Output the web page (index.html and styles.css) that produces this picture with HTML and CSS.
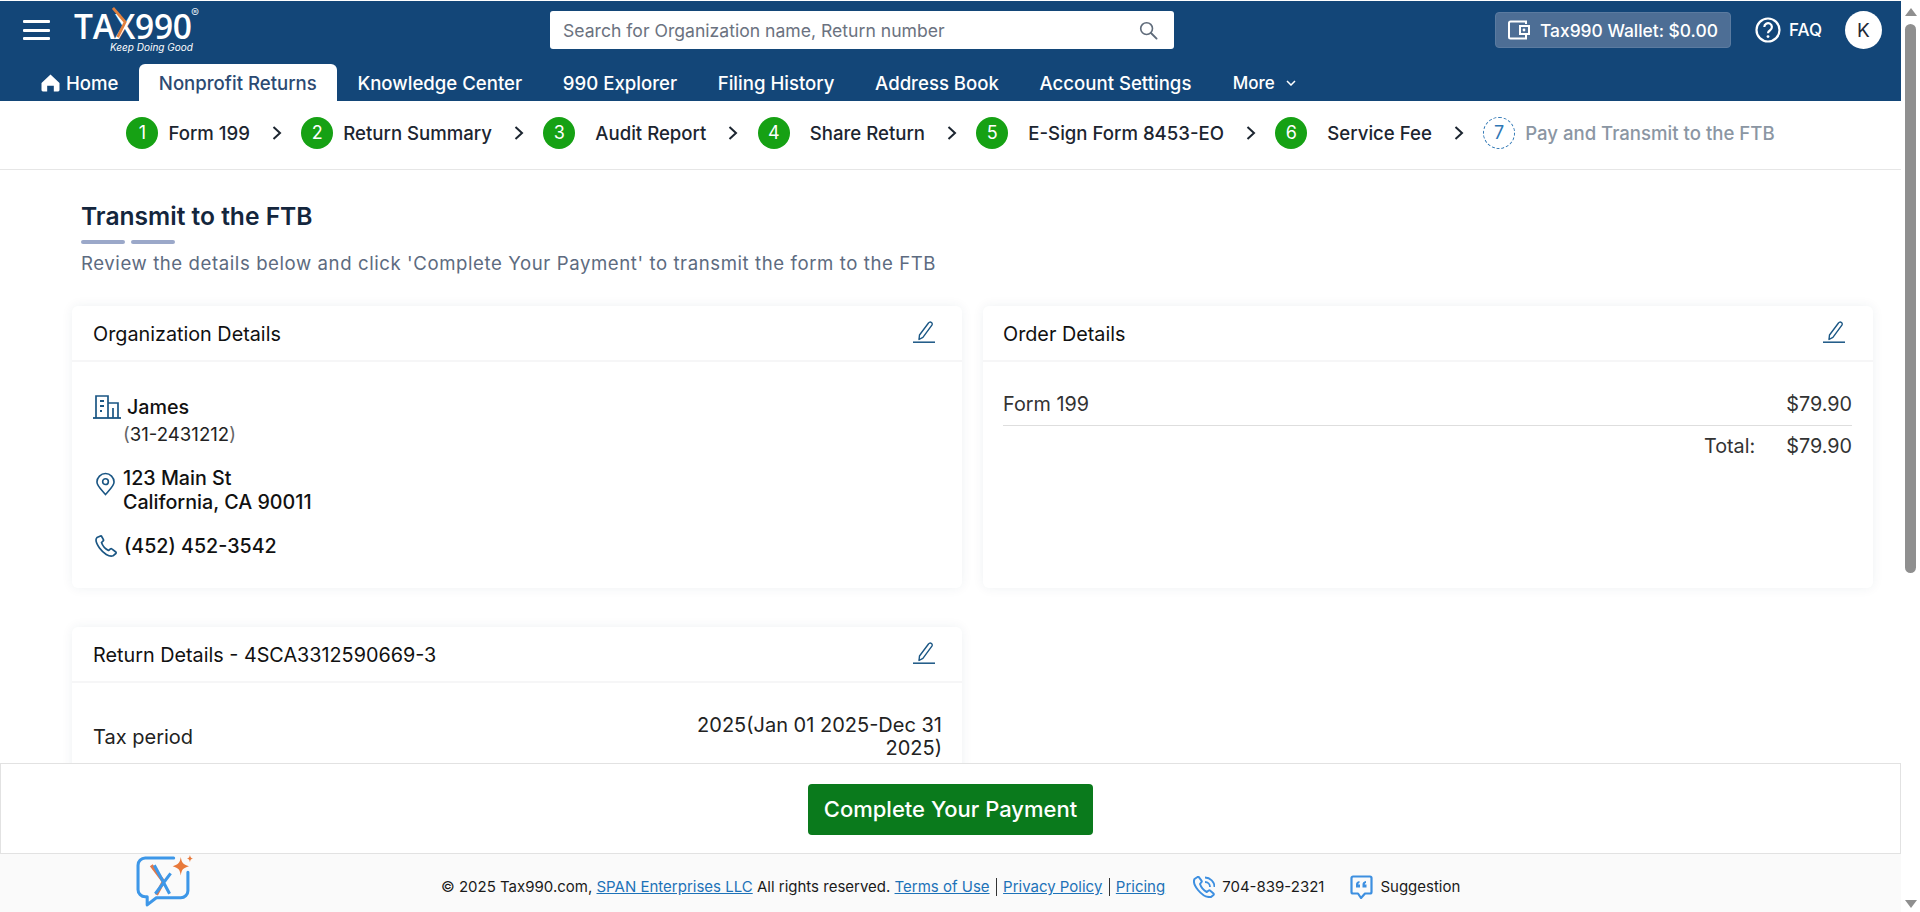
FILE: index.html
```html
<!DOCTYPE html>
<html lang="en">
<head>
<meta charset="utf-8">
<title>Transmit to the FTB - Tax990</title>
<link rel="stylesheet" href="styles.css">
</head>
<body>
<div class="page">
  <div class="app">
    <header class="header">
      <div class="topbar">
        <button class="burger" aria-label="Menu"><span></span><span></span><span></span></button>
        <div class="logo">
          <span class="logo-word">TAX990</span>
          <svg class="logo-slash" viewBox="0 0 16 32"><path d="M1 0 L14 15 L6 31" fill="none" stroke="#e0813f" stroke-width="3"/></svg>
          <span class="logo-reg">®</span>
          <span class="logo-tag">Keep Doing Good</span>
        </div>
        <div class="search">
          <span class="search-text">Search for Organization name, Return number</span>
          <svg class="search-icon" viewBox="0 0 20 20"><circle cx="8" cy="8" r="6.2" fill="none" stroke="#5f6b7a" stroke-width="1.7"/><path d="M12.6 12.6 L18.5 18.5" stroke="#5f6b7a" stroke-width="2" stroke-linecap="round"/></svg>
        </div>
        <div class="top-right">
          <div class="wallet">
            <svg class="wallet-icon" viewBox="0 0 22 20"><path d="M18 4V1.5H2.5A1.5 1.5 0 0 0 1 3v14a1.5 1.5 0 0 0 1.5 1.5H18V15" fill="none" stroke="#fff" stroke-width="2"/><path d="M12 6h9v8h-9z" fill="none" stroke="#fff" stroke-width="2"/><circle cx="16" cy="10" r="1.4" fill="#fff"/></svg>
            <span>Tax990 Wallet: $0.00</span>
          </div>
          <div class="faq">
            <svg class="faq-icon" viewBox="0 0 26 26"><circle cx="13" cy="13" r="11.5" fill="none" stroke="#fff" stroke-width="2.2"/><path d="M9.3 10a3.8 3.8 0 1 1 5.8 3.2c-1.3.8-2.1 1.500-2.100 3.100" fill="none" stroke="#fff" stroke-width="2.200"/><circle cx="13" cy="19.600" r="1.400" fill="#fff"/></svg>
            <span>FAQ</span>
          </div>
          <div class="avatar">K</div>
        </div>
      </div>
      <nav class="nav">
        <a class="nav-item nav-home"><svg class="home-icon" viewBox="0 0 20 19"><path d="M10 0.500 L19.500 9.500 V17 a1.500 1.500 0 0 1-1.500 1.500 H13.500 V12.500 h-7 V18.500 H2 A1.500 1.500 0 0 1 .5 17 V9.500 Z" fill="#fff"/></svg>Home</a>
        <a class="nav-item nav-active">Nonprofit Returns</a>
        <a class="nav-item">Knowledge Center</a>
        <a class="nav-item">990 Explorer</a>
        <a class="nav-item">Filing History</a>
        <a class="nav-item">Address Book</a>
        <a class="nav-item">Account Settings</a>
        <a class="nav-item nav-more">More<svg class="more-icon" viewBox="0 0 10 6"><path d="M1 1l4 4 4-4" fill="none" stroke="#fff" stroke-width="1.500"/></svg></a>
      </nav>
    </header>

    <div class="steps">
      <div class="step"><span class="num">1</span><span class="label">Form 199</span></div>
      <svg class="chev" viewBox="0 0 10 14"><path d="M1.500 1l6.500 6-6.500 6" fill="none" stroke="#1c2530" stroke-width="2"/></svg>
      <div class="step"><span class="num">2</span><span class="label">Return Summary</span></div>
      <svg class="chev" viewBox="0 0 10 14"><path d="M1.500 1l6.500 6-6.500 6" fill="none" stroke="#1c2530" stroke-width="2"/></svg>
      <div class="step step-wide"><span class="num">3</span><span class="label">Audit Report</span></div>
      <svg class="chev" viewBox="0 0 10 14"><path d="M1.500 1l6.500 6-6.500 6" fill="none" stroke="#1c2530" stroke-width="2"/></svg>
      <div class="step step-wide"><span class="num">4</span><span class="label">Share Return</span></div>
      <svg class="chev" viewBox="0 0 10 14"><path d="M1.500 1l6.500 6-6.500 6" fill="none" stroke="#1c2530" stroke-width="2"/></svg>
      <div class="step step-wide"><span class="num">5</span><span class="label">E-Sign Form 8453-EO</span></div>
      <svg class="chev" viewBox="0 0 10 14"><path d="M1.500 1l6.500 6-6.500 6" fill="none" stroke="#1c2530" stroke-width="2"/></svg>
      <div class="step step-wide"><span class="num">6</span><span class="label">Service Fee</span></div>
      <svg class="chev" viewBox="0 0 10 14"><path d="M1.500 1l6.500 6-6.500 6" fill="none" stroke="#1c2530" stroke-width="2"/></svg>
      <div class="step step-todo"><span class="num">7</span><span class="label">Pay and Transmit to the FTB</span></div>
    </div>

    <main class="main">
      <div class="heading">
        <h1 class="title">Transmit to the FTB</h1>
        <div class="dashes"><span></span><span></span></div>
        <p class="subtitle">Review the details below and click 'Complete Your Payment' to transmit the form to the FTB</p>
      </div>
      <div class="cards">
        <section class="card card-tall">
          <div class="card-head">
            <span>Organization Details</span>
            <svg class="edit" viewBox="0 0 22 22"><path d="M6 18.500 L6.500 14 L15.500 2 a2 2 0 0 1 2.800-.6 a2 2 0 0 1 .6 2.800 L9.900 16.300 Z" fill="none" stroke="#1a5684" stroke-width="1.400" stroke-linejoin="round"/><path d="M0 21.200 H22" stroke="#1a5684" stroke-width="1.500"/></svg>
          </div>
          <div class="org">
            <div class="org-name">
              <svg class="ico-building" viewBox="0 0 28 24"><path d="M0 23 H28" stroke="#1a5684" stroke-width="1.800"/><path d="M3 23 V1 H15 V23 M15 8 H25 V23 M20 13 V23" fill="none" stroke="#1a5684" stroke-width="1.700"/><path d="M7 6h4M7 11h4M7 16h2" stroke="#1a5684" stroke-width="1.800"/></svg>
              <span class="org-title">James</span>
            </div>
            <div class="org-ein"><span class="paren">(</span>31-2431212<span class="paren">)</span></div>
            <div class="org-line org-addr">
              <svg class="ico-pin" viewBox="0 0 20 24"><path d="M10 23 C5 17.500 1 14 1 10 a9 9 0 0 1 18 0 C19 14 15 17.500 10 23 Z" fill="none" stroke="#1a5684" stroke-width="1.700"/><circle cx="10" cy="9.500" r="3" fill="none" stroke="#1a5684" stroke-width="1.700"/></svg>
              <div>123 Main St<br>California, CA 90011</div>
            </div>
            <div class="org-line org-phone">
              <svg class="ico-phone" viewBox="0 0 22 22"><path d="M5.500 1 L2 2.500 C.5 4 1 8 4.500 13 C8.500 18.500 14 22 18 20.800 L20.800 18.500 a1 1 0 0 0 0-1.500 L16.800 13.800 a1 1 0 0 0-1.300 0 L13.500 15.500 C10.500 14 7.500 10.500 6.500 7.500 L8.200 5.800 a1 1 0 0 0 .2-1.200 L6.700 1.500 a1 1 0 0 0-1.200-.5 Z" fill="none" stroke="#1a5684" stroke-width="1.700" stroke-linejoin="round"/></svg>
              <div>(452) 452-3542</div>
            </div>
          </div>
        </section>
        <section class="card card-tall">
          <div class="card-head card-head-right">
            <span>Order Details</span>
            <svg class="edit" viewBox="0 0 22 22"><path d="M6 18.500 L6.500 14 L15.500 2 a2 2 0 0 1 2.800-.6 a2 2 0 0 1 .6 2.800 L9.900 16.300 Z" fill="none" stroke="#1a5684" stroke-width="1.400" stroke-linejoin="round"/><path d="M0 21.200 H22" stroke="#1a5684" stroke-width="1.500"/></svg>
          </div>
          <div class="order">
            <div class="order-row"><span>Form 199</span><span>$79.90</span></div>
            <div class="order-total"><span>Total:</span><span>$79.90</span></div>
          </div>
        </section>
        <section class="card card-return">
          <div class="card-head">
            <span>Return Details - 4SCA3312590669-3</span>
            <svg class="edit" viewBox="0 0 22 22"><path d="M6 18.500 L6.500 14 L15.500 2 a2 2 0 0 1 2.800-.6 a2 2 0 0 1 .6 2.800 L9.900 16.300 Z" fill="none" stroke="#1a5684" stroke-width="1.400" stroke-linejoin="round"/><path d="M0 21.200 H22" stroke="#1a5684" stroke-width="1.500"/></svg>
          </div>
          <div class="return-row">
            <span>Tax period</span>
            <span class="return-value">2025(Jan 01 2025-Dec 31 2025)</span>
          </div>
        </section>
      </div>
    </main>

    <div class="actionbar">
      <button class="pay">Complete Your Payment</button>
    </div>

    <footer class="footer">
      <svg class="chat-logo" viewBox="0 0 56 52">
        <path d="M37 3 H9 a7 7 0 0 0-7 7 V34 a7 7 0 0 0 7 7 h2 v8 l9-7 H44 a7 7 0 0 0 7-7 V17" fill="none" stroke="#3d97e8" stroke-width="3" stroke-linecap="round" stroke-linejoin="round"/>
        <path d="M15 10 L27 26 L20 39" fill="none" stroke="#e0784a" stroke-width="3.500"/>
        <path d="M18 10 L33 38 M34 18 L19 38" fill="none" stroke="#3d97e8" stroke-width="3"/>
        <path d="M44 2 C45 8 46 9 52 11 C46 13 45 14 44 20 C43 14 42 13 36 11 C42 9 43 8 44 2 Z" fill="#e8793a"/>
        <path d="M53 0 C53.500 2.500 54 3 56 3.500 C54 4 53.500 4.500 53 7 C52.500 4.500 52 4 50 3.500 C52 3 52.500 2.500 53 0 Z" fill="#e8793a"/>
      </svg>
      <div class="legal">© 2025 Tax990.com, <a class="link">SPAN Enterprises LLC</a> All rights reserved. <a class="link">Terms of Use</a><span class="sep"></span><a class="link">Privacy Policy</a><span class="sep"></span><a class="link">Pricing</a></div>
      <div class="contact">
        <svg class="foot-icon" viewBox="0 0 22 22"><path d="M4.500 1 L1.500 3 C.5 5 1 9 5 14 C9 19 14 21.500 18 21 L20.500 19 a1 1 0 0 0 0-1.500 L17 14.500 a1 1 0 0 0-1.300 0 L13.800 16 C11 14.500 8 11 7 8 L8.500 6 a1 1 0 0 0 0-1.300 L6 1.300 a1 1 0 0 0-1.500-.3 Z" fill="none" stroke="#3d8fe0" stroke-width="2" stroke-linejoin="round"/><path d="M12 6 a5 5 0 0 1 5 5 M12 1.500 a9.500 9.500 0 0 1 9.500 9.500" fill="none" stroke="#3d8fe0" stroke-width="1.800"/></svg>
        <span>704-839-2321</span>
      </div>
      <div class="contact contact-suggest">
        <svg class="foot-icon suggest-icon" viewBox="0 0 23 24"><path d="M3 1.500 H20 a1.500 1.500 0 0 1 1.500 1.500 V17 a1.500 1.500 0 0 1-1.500 1.500 H15 L11 23 L8 18.500 H3 A1.500 1.500 0 0 1 1.500 17 V3 A1.500 1.500 0 0 1 3 1.500 Z" fill="none" stroke="#3d8fe0" stroke-width="2.200" stroke-linejoin="round"/><path d="M6 12.500 V9.500 C6 7.500 7 6.500 9.500 6 V8 C8.500 8.300 8.300 8.800 8.300 9.500 H10 V12.500 Z M12.500 12.500 V9.500 C12.500 7.500 13.500 6.500 16 6 V8 C15 8.300 14.800 8.800 14.800 9.500 H16.500 V12.500 Z" fill="#3d8fe0"/></svg>
        <span>Suggestion</span>
      </div>
    </footer>
  </div>
  <aside class="scrollbar">
    <span class="arrow-up"></span>
    <div class="track"><span class="thumb"></span></div>
    <span class="arrow-down"></span>
  </aside>
</div>
</body>
</html>
```
FILE: styles.css
```css
* { box-sizing: border-box; }
html, body { margin: 0; height: 912px; overflow: hidden; }
body { font-family: Inter, "Liberation Sans", sans-serif; color: #111; background: #fff; }
h1, p { margin: 0; }
button { font-family: inherit; border: 0; padding: 0; }

.page { display: flex; height: 912px; }
.app { flex: 1; min-width: 0; display: flex; flex-direction: column; }

/* Header */
.header { margin-top: 1px; height: 100px; background: #134678; color: #fff; display: flex; flex-direction: column; }
.topbar { height: 63px; padding-bottom: 5px; display: flex; align-items: center; position: relative; }
.burger { width: 27px; height: 20px; margin-left: 23px; background: none; display: flex; flex-direction: column; justify-content: space-between; }
.burger span { display: block; height: 3px; background: #fff; border-radius: 1px; }

.logo { position: relative; width: 126px; height: 50px; margin-left: 24px; flex: none; }
.logo-word { position: absolute; left: 0; top: 7px; font-family: "Open Sans", sans-serif; font-size: 33.500px; font-weight: 600; letter-spacing: -0.3px; line-height: 28px; color: #fff; }
.logo-slash { position: absolute; left: 38px; top: 2px; width: 15px; height: 32px; }
.logo-reg { position: absolute; left: 117px; top: 2px; font-size: 12px; line-height: 12px; color: #dfe7ef; }
.logo-tag { position: absolute; left: 36px; top: 36px; font-size: 10px; line-height: 12px; font-style: italic; color: #fff; white-space: nowrap; }

.search { width: 624px; height: 38px; margin-left: 350px; background: #fff; border-radius: 3px; display: flex; align-items: center; justify-content: space-between; padding: 0 16px 0 13px; flex: none; }
.search-text { font-size: 17.600px; color: #6b7280; }
.search-icon { width: 19px; height: 19px; }

.top-right { display: flex; align-items: center; margin-left: 321px; }
.wallet { width: 236px; height: 36px; background: #4d6e95; border: 1px solid #5b7ba0; border-radius: 4px; display: flex; align-items: center; padding-left: 12px; gap: 10px; font-size: 17.400px; font-weight: 500; }
.wallet-icon { width: 22px; height: 20px; }
.faq { display: flex; align-items: center; margin-left: 24px; gap: 8px; font-size: 17px; font-weight: 500; }
.faq-icon { width: 26px; height: 26px; }
.avatar { width: 37px; height: 38px; margin-left: 23px; border-radius: 50%; background: #fff; color: #1f2937; font-size: 19px; display: flex; align-items: center; justify-content: center; }

.nav { height: 37px; display: flex; align-items: stretch; }
.nav-item { display: flex; align-items: center; font-size: 18.600px; font-weight: 500; color: #fff; white-space: nowrap; padding: 0 20.300px; }
.nav-home { padding: 0 20px 0 41px; gap: 6px; }
.home-icon { width: 19px; height: 18px; }
.nav-active { background: #fff; color: #2c4a72; border-radius: 6px 6px 0 0; height: 37px; }
.nav-more { gap: 11px; font-size: 17px; padding-left: 21px; }
.more-icon { width: 10px; height: 6px; }

/* Steps */
.steps { height: 69px; flex: none; padding-bottom: 5px; border-bottom: 1px solid #e6e6e6; display: flex; align-items: center; justify-content: center; }
.step { display: flex; align-items: center; gap: 10px; }
.step-wide { gap: 20px; }
.num { width: 32px; height: 32px; border-radius: 50%; background: #16a114; color: #fff; font-size: 18px; display: flex; align-items: center; justify-content: center; }
.label { font-size: 18.600px; font-weight: 500; color: #1c2530; white-space: nowrap; }
.chev { width: 10px; height: 14px; margin: 0 19.300px 0 22px; flex: none; }
.step-todo .num { background: #fff; border: 1px dashed #2f77b5; color: #2f77b5; }
.step-todo .label { color: #8b96a3; }

/* Main */
.main { flex: 1; min-height: 0; overflow: hidden; padding: 30px 23px 0 72px; }
.heading { padding-left: 9px; }
.title { font-size: 24.600px; font-weight: 600; line-height: 32px; color: #14263d; }
.dashes { display: flex; gap: 6px; margin-top: 8px; }
.dashes span { width: 44px; height: 4px; border-radius: 2px; background: #9ba8c9; }
.subtitle { margin-top: 7px; font-size: 18.600px; line-height: 24px; letter-spacing: 0.580px; color: #5d6b80; white-space: nowrap; }

.cards { display: grid; grid-template-columns: 890px 890px; gap: 39px 21px; margin-top: 31px; align-items: start; }
.card { background: #fff; border-radius: 6px; box-shadow: 0 0 12px rgba(30, 50, 80, 0.07); }
.card-tall { height: 282px; }
.card-return { height: 320px; }
.card-head { height: 56px; display: flex; align-items: center; justify-content: space-between; padding: 1px 27px 0 21px; font-size: 19.800px; border-bottom: 2px solid #f6f6f7; }
.card-head-right { padding-left: 20px; padding-right: 28px; }
.card-head .edit { margin-top: -3px; }
.edit { width: 22px; height: 22px; flex: none; }

.org { padding: 33px 21px 0; font-size: 19.700px; font-weight: 500; }
.org-name { display: flex; align-items: center; gap: 6px; height: 24px; }
.ico-building { width: 28px; height: 24px; flex: none; }
.org-ein { margin-left: 30px; margin-top: 3px; line-height: 24px; font-size: 18.600px; font-weight: 400; color: #222; }
.paren { color: #666; }
.org-line { display: flex; gap: 8px; line-height: 24px; }
.org-addr { margin-top: 20px; }
.ico-pin { width: 19px; height: 24px; margin: 6px 0 0 3px; flex: none; }
.org-phone { margin-top: 20px; align-items: center; gap: 7px; }
.ico-phone { width: 22px; height: 22px; margin-left: 2px; flex: none; }

.order { padding: 28px 21px 0 20px; font-size: 19.800px; color: #333; }
.order-row { display: flex; justify-content: space-between; height: 36px; line-height: 28px; border-bottom: 1px solid #dedede; font-weight: 400; }
.order-total { display: flex; justify-content: flex-end; gap: 31px; margin-top: 8px; line-height: 24px; }

.return-row { display: flex; justify-content: space-between; align-items: center; padding: 31px 20px 0 21px; font-size: 20px; color: #222; }
.return-value { width: 250px; text-align: right; line-height: 23px; }

/* Action bar */
.actionbar { height: 91px; flex: none; padding-top: 2px; background: #fff; border: 1px solid #e2e2e2; display: flex; align-items: center; justify-content: center; }
.pay { width: 285px; height: 51px; border-radius: 4px; background: #0a7a1c; color: #fff; font-size: 22px; font-weight: 500; padding-bottom: 2px; }

/* Footer */
.footer { height: 58px; flex: none; background: #fafafa; display: flex; align-items: center; padding-top: 5px; font-size: 15px; color: #1a1a1a; position: relative; }
.chat-logo { position: absolute; left: 136px; top: 1px; width: 57px; height: 53px; }
.legal { margin-left: 441px; display: flex; align-items: center; white-space: pre; padding-top: 2px; }
.link { color: #1d72b8; text-decoration: underline; }
.sep { width: 1px; height: 18px; background: #333; margin: 0 6.250px; }
.contact { display: flex; align-items: center; gap: 7px; margin-left: 28px; padding-top: 2px; }
.contact-suggest { margin-left: 26px; }
.foot-icon { width: 22px; height: 22px; flex: none; }
.suggest-icon { width: 23px; height: 24px; }

/* Scrollbar */
.scrollbar { width: 19px; flex: none; background: #fff; display: flex; flex-direction: column; align-items: flex-start; padding: 8px 0 4px 4px; }
.arrow-up { width: 0; height: 0; margin-left: 0; border-left: 6px solid transparent; border-right: 6px solid transparent; border-bottom: 8px solid #8f8f8f; }
.track { flex: 1; padding-top: 8px; }
.thumb { display: block; width: 11px; height: 549px; border-radius: 6px; background: #8f8f8f; }
.arrow-down { width: 0; height: 0; border-left: 6px solid transparent; border-right: 6px solid transparent; border-top: 8px solid #8f8f8f; }
```
